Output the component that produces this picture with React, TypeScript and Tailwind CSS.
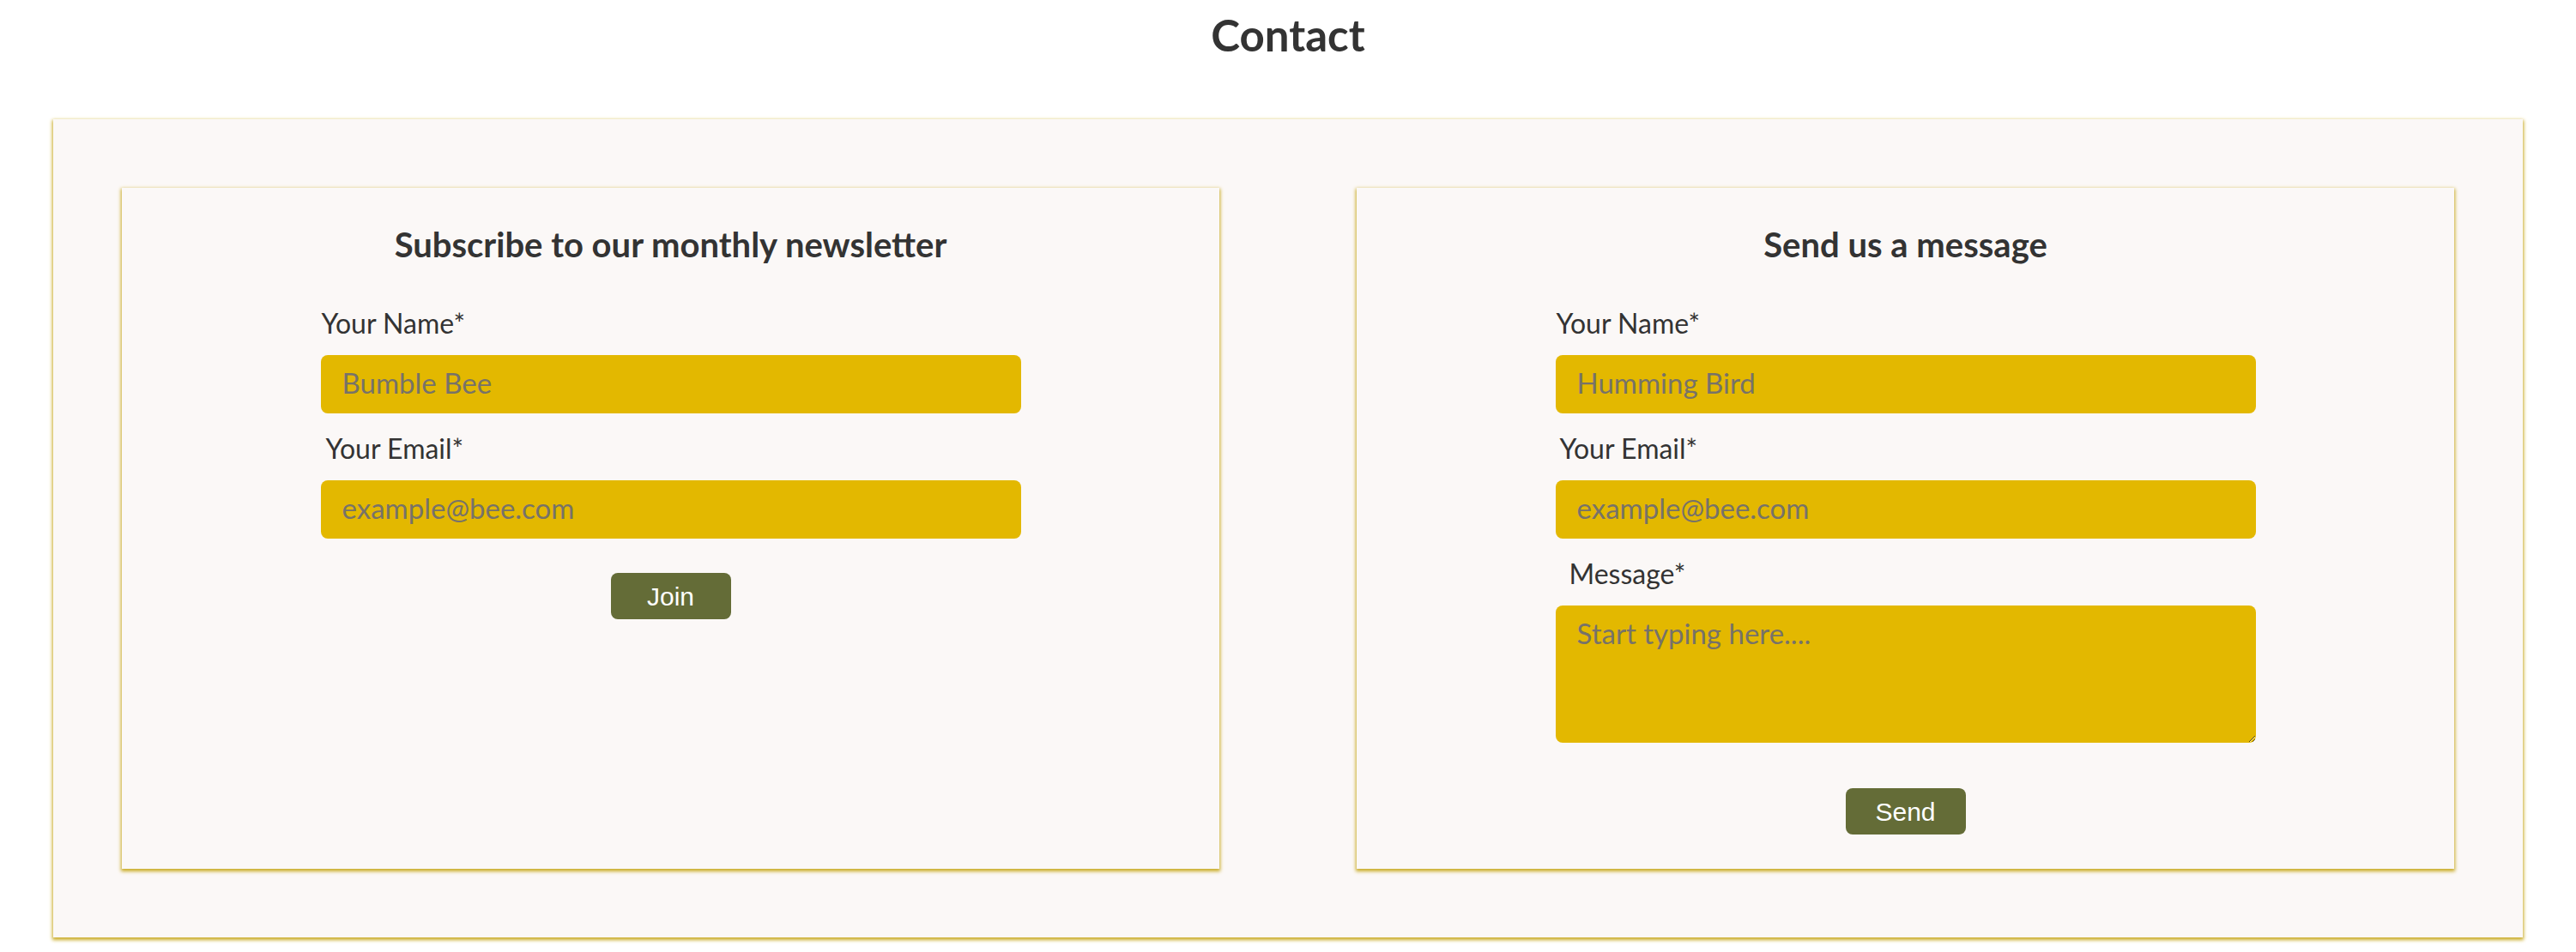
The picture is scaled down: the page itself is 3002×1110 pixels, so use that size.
import React from 'react';

const inputCls =
  "block w-full h-[68px] rounded-[8px] border-none bg-[#e3b800] px-[25px] pb-[4px] text-[33px] text-[#333] outline-none placeholder:text-[#777269] font-['Lato',sans-serif]";

const labelCls = "block text-[32px] leading-none text-[#333]";

const cardCls =
  "flex-1 h-[794px] bg-[#fbf8f7] pt-[46px] shadow-[0px_2px_4px_1px_#c9ab24]";

const btnCls =
  "mx-auto block w-[140px] h-[54px] rounded-[8px] bg-[#646c37] text-[30px] text-white font-['Liberation_Sans',Arial,sans-serif]";

export default function App() {
  return (
    <div className="min-h-screen bg-white font-['Lato',sans-serif] text-[#333]">
      <h1 className="pt-[15px] text-center text-[51px] font-bold leading-none">Contact</h1>

      <section className="mx-[62px] mt-[73px] flex gap-[160px] bg-[#fbf8f7] p-[80px] shadow-[0px_2px_4px_1px_#c9ab24]">
        {/* Newsletter */}
        <div className={cardCls}>
          <h2 className="text-center text-[40px] font-bold leading-none">
            Subscribe to our monthly newsletter
          </h2>
          <form className="mx-auto mt-[56px] w-[816px]" onSubmit={(e) => e.preventDefault()}>
            <label className={`${labelCls} ml-[1px]`}>Your Name*</label>
            <input className={`${inputCls} mt-[21px]`} placeholder="Bumble Bee" />
            <label className={`${labelCls} ml-[6px] mt-[25px]`}>Your Email*</label>
            <input className={`${inputCls} mt-[21px]`} placeholder="example@bee.com" />
            <button type="submit" className={`${btnCls} mt-[40px]`}>Join</button>
          </form>
        </div>

        {/* Message */}
        <div className={cardCls}>
          <h2 className="text-center text-[40px] font-bold leading-none">Send us a message</h2>
          <form className="mx-auto mt-[56px] w-[816px]" onSubmit={(e) => e.preventDefault()}>
            <label className={`${labelCls} ml-[1px]`}>Your Name*</label>
            <input className={`${inputCls} mt-[21px]`} placeholder="Humming Bird" />
            <label className={`${labelCls} ml-[5px] mt-[25px]`}>Your Email*</label>
            <input className={`${inputCls} mt-[21px]`} placeholder="example@bee.com" />
            <label className={`${labelCls} ml-[16px] mt-[25px]`}>Message*</label>
            <textarea
              className="mt-[21px] block h-[160px] w-full rounded-[8px] border-none bg-[#e3b800] px-[25px] pt-[8px] text-[33px] text-[#333] outline-none placeholder:text-[#777269] font-['Lato',sans-serif]"
              placeholder="Start typing here...."
            />
            <button type="submit" className={`${btnCls} mt-[53px]`}>Send</button>
          </form>
        </div>
      </section>
    </div>
  );
}
